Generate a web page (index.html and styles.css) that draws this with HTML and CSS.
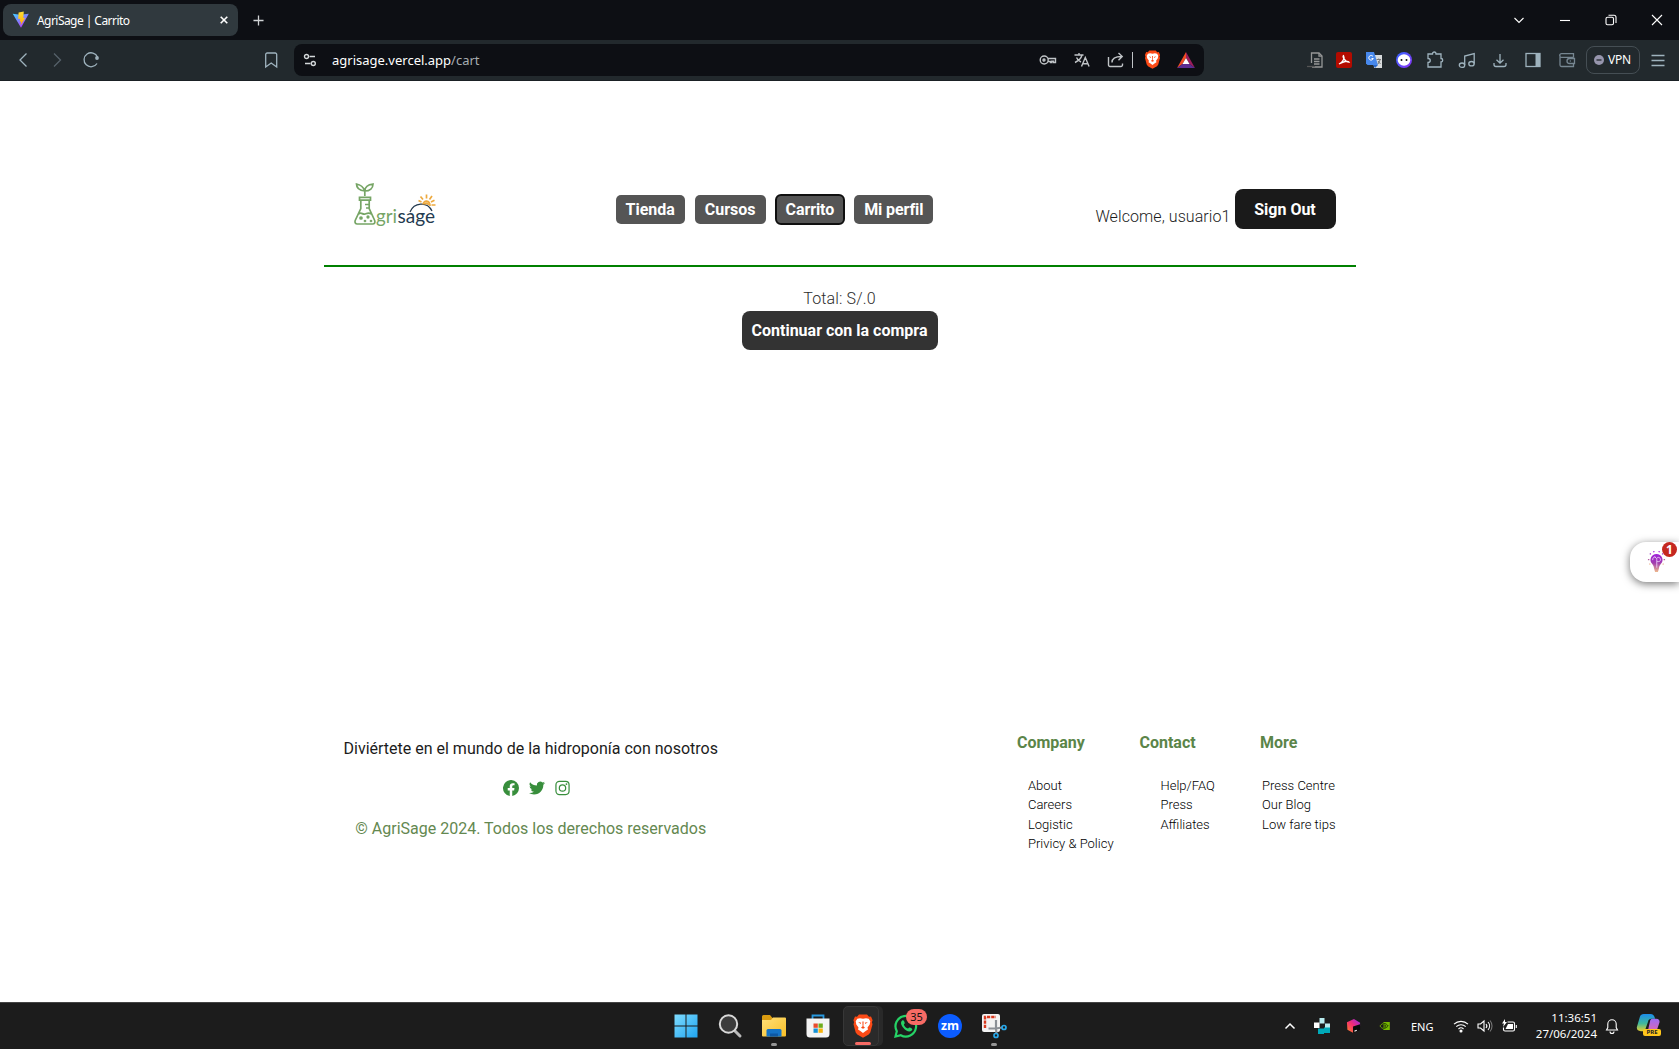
FILE: index.html
```html
<!DOCTYPE html>
<html lang="es">
<head>
<meta charset="utf-8">
<title>AgriSage | Carrito</title>
<link rel="stylesheet" href="styles.css">
</head>
<body>
<svg class="defs" width="0" height="0">
  <defs>
    <linearGradient id="vite" x1="0" y1="0" x2=".7" y2="1"><stop stop-color="#41d1ff"/><stop offset="1" stop-color="#bd34fe"/></linearGradient>
    <linearGradient id="bolt" x1="0" y1="0" x2="0" y2="1"><stop stop-color="#ffdd35"/><stop offset="1" stop-color="#ffa800"/></linearGradient>
    <linearGradient id="win" x1="0" y1="0" x2="1" y2="1"><stop stop-color="#7fdcff"/><stop offset="1" stop-color="#1fa4f0"/></linearGradient>
    <linearGradient id="fold" x1="0" y1="0" x2="1" y2="1"><stop stop-color="#ffe07a"/><stop offset="1" stop-color="#f8bf27"/></linearGradient>
    <linearGradient id="bulb" x1="0" y1="0" x2="0" y2="1"><stop stop-color="#a020dc"/><stop offset=".5" stop-color="#a03cae"/><stop offset="1" stop-color="#eeb98d"/></linearGradient>
    <linearGradient id="cube" x1="0" y1="1" x2="1" y2="0"><stop stop-color="#ff8a20"/><stop offset=".5" stop-color="#f52b71"/><stop offset="1" stop-color="#9128e8"/></linearGradient>
    <linearGradient id="cop1" x1="0" y1="0" x2="0" y2="1"><stop stop-color="#1b8ded"/><stop offset=".55" stop-color="#40b89b"/><stop offset="1" stop-color="#e8cf2e"/></linearGradient>
    <linearGradient id="cop2" x1="0" y1="0" x2="0" y2="1"><stop stop-color="#9b6cf3"/><stop offset="1" stop-color="#f0669d"/></linearGradient>
    <linearGradient id="disc" x1="0" y1="0" x2="1" y2="1"><stop stop-color="#3267ff"/><stop offset="1" stop-color="#8d31f6"/></linearGradient>
    <symbol id="lion" viewBox="0 0 20 24">
      <path fill="#fb4a16" d="M6 .5h8l2 2.200 2-.2 1.600 3.700-.7 2 .6 2-2.200 8.200-1.600 2L10 23.700l-5.700-3.300-1.600-2L.5 10.200l.6-2-.7-2L2 2.500l2 .2z"/>
      <path fill="#fff" d="M7 4.200l3 .6 3-.6 2.700.5 1.600 2.600-.6 3.200-2.200 3 .5 2-2 1.300-3 2.300-3-2.300-2-1.300.5-2-2.200-3-.6-3.200 1.600-2.600z"/>
      <path fill="#fb4a16" d="M5.200 8l3.100.8-.8 1.300zM14.800 8l-3.100.8.8 1.300zM9.400 7.500h1.200l-.2 4.800 1.600 1.500-2 1-2-1 1.600-1.500z"/>
    </symbol>
  </defs>
</svg>

<header class="browser">
  <div class="tabs">
    <div class="tab">
      <svg class="fav" viewBox="0 0 18 18"><path fill="url(#vite)" d="M.7 2.800l7.500 1 8.600-1L9 16.700z"/><path fill="url(#bolt)" d="M11.800.5L6.600 1.600 6.200 8l2-.3-.4 3.200 1.500-.5-.8 4 4.800-7.700-2 .3z"/></svg>
      <span class="tab-title">AgriSage | Carrito</span>
      <svg class="tab-close" viewBox="0 0 8 8"><path d="M.7.700l6.600 6.600M7.300.7L.7 7.300"/></svg>
    </div>
    <svg class="new-tab" viewBox="0 0 12 12"><path d="M6 .5v11M.5 6h11"/></svg>
    <div class="window-controls">
      <svg viewBox="0 0 12 12"><path d="M1.500 4L6 8.500 10.500 4"/></svg>
      <svg viewBox="0 0 12 12"><path d="M1 6.500h10"/></svg>
      <svg viewBox="0 0 12 12"><rect x="1" y="3.200" width="7.500" height="7.500" rx="1.500"/><path d="M3.500 1.300H9a2 2 0 0 1 2 2V9"/></svg>
      <svg viewBox="0 0 12 12"><path d="M1 1l10 10M11 1L1 11"/></svg>
    </div>
  </div>
  <div class="toolbar">
    <svg class="ic back" viewBox="0 0 20 20"><path d="M13.500 3.500L7 10l6.500 6.500"/></svg>
    <svg class="ic forward" viewBox="0 0 20 20"><path d="M7 3.500l6.500 6.500L7 16.500"/></svg>
    <svg class="ic reload" viewBox="0 0 20 20"><path d="M16.500 7A7 7 0 1 0 16 13.500"/><circle cx="16" cy="8" r="1.900" fill="#9fb0ba" stroke="none"/></svg>
    <svg class="ic bookmark" viewBox="0 0 20 20"><path d="M4.700 4.500a1.500 1.500 0 0 1 1.500-1.500h8a1.500 1.500 0 0 1 1.500 1.500V17l-5.500-4-5.500 4z"/></svg>
    <div class="address">
      <svg class="site" viewBox="0 0 14 14"><circle cx="3.500" cy="3.500" r="2"/><path d="M6.500 3.500H12M2 10.500h5.500"/><circle cx="10.300" cy="10.500" r="2"/></svg>
      <span class="url">agrisage.vercel.app<i>/cart</i></span>
      <div class="address-tools">
        <svg class="key" viewBox="0 0 18 14"><circle cx="5.200" cy="7" r="4"/><circle cx="5" cy="7" r="1" /><path d="M9 5.500h7.500v4h-2V8.200h-1.700v1.300H11.500V8.500H9"/></svg>
        <svg class="lang" viewBox="0 0 18 18"><path d="M1.500 4h9M6 2v2M9 4c-1 4-4 6-7 7.500M3.500 6.500C4.500 9 6 10 8 11M8.500 15.500l3.800-9 3.800 9M9.700 12.700h5.200"/></svg>
        <svg class="share" viewBox="0 0 18 18"><path d="M1.500 6v8a1.500 1.500 0 0 0 1.500 1.500h11a1.500 1.500 0 0 0 1.500-1.500v-1.500M5 11.500c0-4 3-6 9.500-6M11.500 2l3.700 3.500-3.700 3.700"/></svg>
        <b class="sep"></b>
        <svg class="shield"><use href="#lion"/></svg>
        <svg class="bat" viewBox="0 0 18 16"><path fill="#f04b23" d="M9 0v6L5.500 12 0 16z"/><path fill="#9c1d5c" d="M9 0l9 16-5.500-4L9 6z"/><path fill="#5c2d91" d="M0 16l5.500-4h7L18 16z"/><path fill="#fff" d="M9 6l3.500 6h-7z"/></svg>
      </div>
    </div>
    <div class="extensions">
      <svg class="ic grey" viewBox="0 0 20 20"><path d="M5.500 13V3h7.500l3 3v11H6"/><path d="M13 3v3.200h3M8 9h5.500M8 11.500h5.500M8 14h5.500"/><path stroke="#555" d="M1 16.500h8"/></svg>
      <svg class="ic g8" viewBox="0 0 20 20"><rect class="solid" x="2" y="2" width="16" height="16" rx="2" fill="#b30b00"/><path stroke="#fff" d="M5 14c4-2 6-6 4.500-8.500C8 6 10.500 12 15 12c-1-1.500-6-.5-10 2z"/></svg>
      <svg class="ic g10" viewBox="0 0 20 20"><path class="solid" fill="#d8dbdd" d="M9 5h9v13h-8z"/><path class="solid" fill="#4788ec" d="M2 2h8l4 13H3.500L2 13.500z"/><path class="solid" fill="#2866c8" d="M9 15h5l-3 3z"/><path stroke="#fff" stroke-width="1" d="M9 6.500A2.300 2.300 0 1 0 9.300 8.500H7.500"/><path stroke="#777" stroke-width="1" d="M12.500 9.500H17M14.700 8.500v1M16 10l-2 4M14 11l2.500 3"/></svg>
      <svg class="ic g10" viewBox="0 0 20 20"><circle class="solid" cx="10" cy="10" r="8" fill="url(#disc)"/><ellipse class="solid" cx="10" cy="10" rx="6.300" ry="5.800" fill="#fff"/><path stroke="#222" stroke-width="1.600" d="M7.500 9v2M12.500 9v2"/></svg>
      <svg class="ic g11" viewBox="0 0 20 20"><path d="M3 4h4.500c0-2.700 3.500-2.700 3.500 0h5v4.500c2.300 0 2.300 3.500 0 3.500v5H3v-4.500c3 0 3-4 0-4z"/></svg>
      <svg class="ic g12" viewBox="0 0 20 20"><ellipse cx="5" cy="15.200" rx="2.700" ry="2.200"/><ellipse cx="14.500" cy="13.700" rx="2.700" ry="2.200"/><path d="M7.700 15V6l9.500-2.500v10M7.700 15V6"/></svg>
      <svg class="ic g13" viewBox="0 0 20 20"><path d="M10 4v9M6.500 9.800L10 13.200l3.500-3.400M4 13v1.500a2 2 0 0 0 2 2h8a2 2 0 0 0 2-2V13"/></svg>
      <svg class="ic g13" viewBox="0 0 20 20"><rect x="3" y="3.500" width="14" height="13"/><path class="solid" fill="#9fb3be" d="M12.500 3.500H17v13h-4.500z"/></svg>
      <svg class="ic g14 dim" viewBox="0 0 20 20"><path d="M3 5.500V15a1.500 1.500 0 0 0 1.500 1.500h12v-3M16.500 7.500V3.700h-12a1.500 1.500 0 0 0 0 3.600h12M17.500 13.500h-5a2.500 2.500 0 0 1 0-5h5z"/><path d="M12.800 11h1"/></svg>
      <span class="vpn"><svg viewBox="0 0 10 10"><circle cx="5" cy="5" r="5" fill="#9695ad"/><path stroke="#22292d" stroke-width="1.300" d="M2.500 5h5"/></svg>VPN</span>
      <svg class="ic g8" viewBox="0 0 20 20"><path d="M3.500 5.500h13M3.500 10.500h13M3.500 15.500h13"/></svg>
    </div>
  </div>
</header>

<main class="page">
  <div class="masthead">
    <svg class="logo" viewBox="0 0 82 48">
      <g fill="none" stroke="#76a565" stroke-width="1.700">
        <path d="M10.800 14V9C9 4 5.500 2.500 2.500 2c0 4 3 6.500 8.300 7C11 5 14 2.500 19 2c0 4-3 7-8.200 7"/>
        <path d="M5.500 15.300h11v2.900h-11zM6.800 18.500v8L1.200 38.500c-.7 2 .3 3.500 2 3.500h15.500c1.800 0 2.700-1.500 2-3.500l-5.500-12v-8M11 22.500h4M12 26h3M4.500 32c3-2.500 4 1 6.500 0s4-2 6.500 0"/>
        <circle cx="7" cy="36" r="1"/><circle cx="14" cy="35" r=".8"/><circle cx="11" cy="39" r=".5"/><circle cx="17" cy="39" r=".5"/>
      </g>
      <text x="22" y="41" textLength="21" lengthAdjust="spacingAndGlyphs" fill="#76a565">gri</text>
      <text x="43.500" y="41" textLength="37.500" lengthAdjust="spacingAndGlyphs" fill="#243b50">sage</text>
      <path d="M56 30c4-9.500 17-11 22-1" fill="none" stroke="#243b50" stroke-width="1.300"/>
      <path d="M69 22.500c.5-5 7-4.500 7 1.500M70.500 22.500c1-2 3-2 4 .5M67.500 20l-3-1.500M69 17.500l-2.500-3M72.500 16.500V12.500M75.500 17.500l2.500-3.500M77 20l3.500-1.700M77.500 23h4" fill="none" stroke="#eda93e" stroke-width="1.700"/>
    </svg>
    <nav class="nav">
      <a>Tienda</a><a>Cursos</a><a class="focused">Carrito</a><a>Mi perfil</a>
    </nav>
    <div class="account"><span>Welcome, usuario1</span><button class="sign-out">Sign Out</button></div>
  </div>
  <section class="cart">
    <p>Total: S/.0</p>
    <button class="checkout">Continuar con la compra</button>
  </section>
  <footer class="footer">
    <div class="about">
      <p class="tagline">Diviértete en el mundo de la hidroponía con nosotros</p>
      <div class="social">
        <svg viewBox="0 0 16 16"><path d="M16 8.050a8 8 0 1 0-9.250 7.950v-5.620H4.720V8.050h2.030V6.280c0-2 1.200-3.130 3.020-3.130.88 0 1.790.16 1.790.16v1.980h-1c-1 0-1.310.62-1.310 1.260v1.500h2.220l-.35 2.330H9.250V16A8 8 0 0 0 16 8.050z"/></svg>
        <svg viewBox="0 0 16 16"><path d="M5 14.500c6 0 9.300-5 9.300-9.300v-.4A6.700 6.700 0 0 0 16 3.100a6.500 6.500 0 0 1-1.900.5 3.300 3.300 0 0 0 1.500-1.800 6.600 6.600 0 0 1-2.100.8 3.300 3.300 0 0 0-5.600 3A9.300 9.300 0 0 1 1.100 2.200a3.300 3.300 0 0 0 1 4.400 3.200 3.200 0 0 1-1.500-.4 3.300 3.300 0 0 0 2.700 3.200 3.200 3.200 0 0 1-1.500.1 3.300 3.300 0 0 0 3.100 2.200A6.600 6.600 0 0 1 0 13a9.300 9.300 0 0 0 5 1.500z"/></svg>
        <svg viewBox="0 0 16 16"><g fill="none" stroke="#388e3c" stroke-width="1.300"><rect x="1" y="1" width="14" height="14" rx="3.700"/><circle cx="8" cy="8" r="3.400"/></g><circle cx="12.200" cy="3.800" r="1"/></svg>
      </div>
      <p class="copyright">© AgriSage 2024. Todos los derechos reservados</p>
    </div>
    <div class="links company"><h3>Company</h3><ul><li>About</li><li>Careers</li><li>Logistic</li><li>Privicy &amp; Policy</li></ul></div>
    <div class="links contact"><h3>Contact</h3><ul><li>Help/FAQ</li><li>Press</li><li>Affiliates</li></ul></div>
    <div class="links more"><h3>More</h3><ul><li>Press Centre</li><li>Our Blog</li><li>Low fare tips</li></ul></div>
  </footer>
  <aside class="helper">
    <svg viewBox="0 0 20 24"><path fill="url(#bulb)" d="M10 3.500a6.300 6.300 0 0 0-4.500 10.700c1.500 2 1.700 3 2 4.800l1 3.500h3l1-3.500c.3-1.800.5-2.800 2-4.800A6.300 6.300 0 0 0 10 3.500z"/><path stroke="url(#bulb)" stroke-width="1.400" fill="none" d="M1 9.500h1.500M17.500 9.500H19M3 3l1 1M17 3l-1 1M7 .5l.4 1.300M13 .5l-.4 1.300M2.500 14.500l1-.5M17.500 14.500l-1-.5"/><path stroke="#efd2fa" stroke-width=".9" fill="none" d="M10.300 18v-9M6 10c0-4 3-4 4-1.500 2-3 5-.5 4 2-1 1.500-2.500 1-3.500 1M8 6.500l1.500 1"/></svg>
    <span class="badge">1</span>
  </aside>
</main>

<div class="taskbar">
  <div class="apps">
    <div class="app"><svg viewBox="0 0 24 24"><path fill="url(#win)" d="M.5.500h11v11H.5zM12.500.5h11v11h-11zM.5 12.500h11v11H.5zM12.500 12.500h11v11h-11z"/></svg></div>
    <div class="app"><svg viewBox="0 0 24 24"><path stroke="#b9b9b9" stroke-width="3" stroke-linecap="round" d="M16.500 16.500l5.500 5.500"/><circle cx="10.500" cy="10" r="8.700" fill="#3b3b3b" stroke="#d8d8d8" stroke-width="2"/></svg></div>
    <div class="app dot"><svg viewBox="0 0 24 24"><path fill="#d99b10" d="M0 2.500A1.500 1.500 0 0 1 1.500 1H8l2.500 3H20v6H0z"/><path fill="url(#fold)" d="M0 6h9l2-2.500h12a1 1 0 0 1 1 1v17a1 1 0 0 1-1 1H1a1 1 0 0 1-1-1z"/><path fill="#1473c7" d="M4.500 22.500v-6a1.500 1.500 0 0 1 1.500-1.500h12a1.500 1.500 0 0 1 1.500 1.500v6z"/><path fill="#0d58a4" d="M8 19.500h8v3H8z"/></svg></div>
    <div class="app"><svg viewBox="0 0 24 24"><path fill="none" stroke="#2899e0" stroke-width="1.800" d="M6.500 6V1.500h11V6"/><path fill="#f4f4f4" d="M.5 4.500h23V20a3.500 3.500 0 0 1-3.500 3.500H4A3.500 3.500 0 0 1 .5 20z"/><path fill="#e94b2c" d="M7.500 9.500h4.300v4.300H7.500z"/><path fill="#6eac1b" d="M12.500 9.500h4.300v4.300h-4.300z"/><path fill="#1491d6" d="M7.500 14.500h4.300v4.300H7.500z"/><path fill="#f7b20b" d="M12.500 14.500h4.300v4.300h-4.300z"/></svg></div>
    <div class="app active"><svg><use href="#lion"/></svg></div>
    <div class="app"><svg viewBox="0 0 24 24"><path fill="none" stroke="#25d366" stroke-width="2.200" d="M1.500 22.500l1.300-5.300A10.300 10.300 0 1 1 6.800 21.200z"/><path fill="#25d366" d="M8.500 6.200C6 8 7 11 9.500 14s6 4.500 8.200 2.500c1.200-1.200.8-1.800-1.700-3-1.500-.6-1.500 1.500-2.700.8-1.500-.8-2.700-2-3.300-3.400-.4-1 1-1 .7-2.200-.5-1.800-.8-2.800-2.200-2.500z"/></svg><span class="count">35</span></div>
    <div class="app"><svg viewBox="0 0 24 24"><circle cx="12" cy="12" r="12" fill="#0b5cff"/><text class="zm" x="3" y="15.800" textLength="18" lengthAdjust="spacingAndGlyphs">zm</text></svg></div>
    <div class="app dot"><svg class="snip" viewBox="0 0 24 24"><rect width="18" height="18" rx="2" fill="#f3f3f3"/><path d="M3 14V3h11" fill="none" stroke="#d93a20" stroke-width="2.400" stroke-dasharray="3.300 1"/><path d="M6.500 14.500H14V6M14 14.500l6-1M14 14.500L14.500 20" fill="none" stroke="#8b9096" stroke-width="2.200"/><g fill="none" stroke="#28a8ea" stroke-width="1.700"><circle cx="22" cy="13.500" r="2"/><circle cx="14" cy="21.500" r="2"/></g></svg></div>
  </div>
  <div class="tray">
    <svg class="t-up" viewBox="0 0 12 12"><path d="M1.500 8.500L6 4l4.500 4.500"/></svg>
    <svg class="t-tiles" viewBox="0 0 16 16"><path fill="#b9ecef" d="M5.500 0h5v5.500h-5zM11 5.500h5v4.500h-5z"/><path fill="#fff" d="M0 4.500h5.500v5.500H0z"/><path fill="#00a9b8" d="M4 10.500h6V16H4zM10 9.500h6v5.500h-6z"/></svg>
    <svg class="t-cube" viewBox="0 0 16 16"><path fill="url(#cube)" d="M1 4l7.500-3.500L15 4.500V8l-7 3v4.500L1.500 12z"/><path fill="#090909" d="M7.500 8.500L15 6v6l-7.500 3.500z"/><path stroke="#fff" d="M9 13.500l2.500-1"/></svg>
    <svg class="t-nv" viewBox="0 0 14 10"><path fill="#76b900" d="M5 0h8v10H5z"/><path fill="none" stroke="#76b900" d="M5 2C3 2 1.500 4 .7 5c1 1.500 2.500 3 4.300 3"/><path fill="none" stroke="#183000" d="M5 2c3-.4 5 1.500 6 3-1 1-3 3-6 3M5 4c2-.3 3 .5 3.500 1.200C8 6 6.500 6.500 5 6"/></svg>
    <span class="t-lang">ENG</span>
    <svg class="t-wifi" viewBox="0 0 16 14"><path d="M1 5.200a10 10 0 0 1 14 0M3.300 7.700a6.800 6.800 0 0 1 9.400 0M5.500 10a3.600 3.600 0 0 1 5 0"/><circle cx="8" cy="12" r="1" fill="#fff"/></svg>
    <svg class="t-vol" viewBox="0 0 16 14"><path d="M1 5h2.500L7 2v10L3.500 9H1zM9 5a3 3 0 0 1 0 4M11 3a6 6 0 0 1 0 8"/><path stroke="#777" d="M13 1.500a8.500 8.500 0 0 1 0 11"/></svg>
    <svg class="t-batt" viewBox="0 0 16 14"><path d="M6.500 3H12a1.500 1.500 0 0 1 1.500 1.500v6A1.500 1.500 0 0 1 12 12H4a1.500 1.500 0 0 1-1.500-1.500V8.500M15.300 6v3"/><path fill="#fff" stroke="none" d="M7 5h5v5H4.500zM4 0L1 4.500h2L2 8l4-5H4z"/></svg>
    <div class="clock"><span>11:36:51</span><span>27/06/2024</span></div>
    <svg class="t-bell" viewBox="0 0 14 16"><path d="M1.500 12l1.300-2.500V6a4.200 4.200 0 0 1 8.400 0v3.500L12.500 12zM5 13.500a2 2 0 0 0 4 0"/></svg>
    <div class="copilot"><svg viewBox="0 0 24 22"><path fill="url(#cop1)" d="M7 0h7c3 0 4 2 5 5h-4c-2 0-3 1-3.500 3L8 18H4c-3 0-5-2-4-5L3 3c.6-2 2-3 4-3z"/><path fill="url(#cop2)" d="M16 5h4c3 0 4 2 3.500 4L20 19c-.6 2-2 3-4 3H9l2-3 2.500-11C14 6 14.500 5 16 5z"/></svg><b>PRE</b></div>
  </div>
</div>
</body>
</html>
```
FILE: styles.css
```css
* { box-sizing: border-box; }
html, body { margin: 0; height: 100%; }
body { display: flex; flex-direction: column; width: 1679px; height: 1049px; overflow: hidden; background: #fff; font-family: Roboto, sans-serif; font-size: 16px; }
svg { display: block; flex: none; overflow: visible; }
.defs { position: absolute; }
p, h3, ul { margin: 0; padding: 0; }
ul { list-style: none; }

.browser, .taskbar { flex: none; font-family: "Noto Sans", sans-serif; color: #fff; }
.tabs { display: flex; align-items: center; height: 40px; padding-left: 3px; background: #0d0f14; }
.tab { display: flex; align-items: center; width: 235px; height: 32px; padding: 0 10px 0 9px; border-radius: 8px; background: #30393e; font-size: 12px; }
.fav { width: 18px; height: 18px; }
.tab-title { margin-left: 7px; letter-spacing: -.55px; white-space: nowrap; }
.tab-close { width: 8px; height: 8px; margin-left: auto; fill: none; stroke: #fff; stroke-width: 1.6; }
.new-tab { width: 11px; height: 11px; margin-left: 15px; fill: none; stroke: #d0d3d5; stroke-width: 1.4; }
.window-controls { display: flex; gap: 34px; margin-left: auto; padding-right: 16px; }
.window-controls svg { width: 12px; height: 12px; fill: none; stroke: #fff; stroke-width: 1.1; }
.toolbar { display: flex; align-items: center; height: 41px; padding: 0 11px 1px 13px; background: #22292d; border-bottom: 1px solid #1a2024; }
.ic { width: 20px; height: 20px; fill: none; stroke: #9fb3be; stroke-width: 1.3; }
.ic .solid { stroke: none; }
.forward { margin-left: 14px; stroke: #56616a; }
.reload { margin-left: 14px; }
.bookmark { margin-left: 160px; }
.address { display: flex; align-items: center; width: 910px; height: 32px; margin-left: 13px; padding: 0 9px; border-radius: 8px; background: #0d0f14; }
.site { width: 14px; height: 14px; fill: none; stroke: #d4d8da; stroke-width: 1.4; }
.url { margin-left: 15px; font-size: 13px; }
.url i { font-style: normal; color: #a6acb1; }
.address-tools { display: flex; align-items: center; margin-left: auto; }
.address-tools svg { fill: none; stroke: #c0c4c7; stroke-width: 1.4; }
.address-tools .key { width: 18px; height: 14px; }
.lang { width: 18px; height: 18px; margin-left: 16px; }
.share { width: 18px; height: 18px; margin-left: 16px; }
.sep { width: 1px; height: 16px; margin-left: 7px; background: #c0c4c7; }
.address-tools .shield { width: 17px; height: 19px; margin-left: 11px; stroke: none; }
.address-tools .bat { width: 18px; height: 16px; margin-left: 16px; stroke: none; }
.extensions { display: flex; align-items: center; margin-left: auto; }
.grey { stroke: #969797; }
.dim { stroke: #768691; }
.g8 { margin-left: 8px; } .g10 { margin-left: 10px; } .g11 { margin-left: 11px; }
.g12 { margin-left: 12px; } .g13 { margin-left: 13px; } .g14 { margin-left: 14px; }
.vpn { display: flex; align-items: center; gap: 4px; width: 54px; height: 28px; margin-left: 9px; padding-left: 7px; border: 1px solid #454e54; border-radius: 8px; font-size: 12px; letter-spacing: -.2px; }
.vpn svg { width: 10px; height: 10px; }

.page { position: relative; display: flex; flex: 1; flex-direction: column; align-items: center; padding-top: 81px; }
.masthead { display: flex; align-items: flex-start; width: 1032px; height: 105px; padding: 20px 20px 0 30px; border-bottom: 2px solid #008000; }
.logo { width: 82px; height: 48px; font-family: Lato, sans-serif; font-size: 20px; }
.nav { display: flex; gap: 10px; margin: 13px 0 0 180px; color: #fff; font-weight: 700; }
.nav a { height: 29px; padding: 0 10px; border-radius: 5px; background: #555; line-height: 29px; white-space: nowrap; }
.nav .focused { outline: 2px solid #101010; outline-offset: -1px; letter-spacing: -.1px; }
.nav a:last-child { letter-spacing: -.1px; }
.account { display: flex; align-items: flex-start; gap: 5px; margin: 7px 0 0 auto; color: #1c1c1c; font-weight: 300; }
.account span { margin-top: 18px; letter-spacing: .08px; line-height: 19px; }
.account span { margin-right: -1px; }
button { border: 0; border-radius: 8px; color: #fff; font: 700 16px Roboto, sans-serif; }
.sign-out { width: 101px; height: 40px; padding: 0; background: #1a1a1a; }
.cart { display: flex; flex-direction: column; align-items: center; padding-top: 22px; color: #2c2c2c; font-weight: 300; line-height: 19px; }
.cart p { letter-spacing: .15px; }
.checkout { width: 196px; height: 39px; margin-top: 3px; padding: 0; background: #333; }
.footer { display: flex; width: 992px; height: 150px; margin-top: 383px; }
.about { display: flex; flex-direction: column; align-items: center; width: 375px; margin-top: 6px; line-height: 19px; }
.tagline { color: #1c1c1c; white-space: nowrap; }
.social { display: flex; gap: 10px; margin: 22px 0 0 11px; fill: #388e3c; }
.social svg { width: 16px; height: 16px; }
.social svg:last-child { width: 15px; height: 16px; }
.copyright { margin-top: 23px; color: #648850; white-space: nowrap; }
.links { white-space: nowrap; font-weight: 300; }
.links h3 { color: #5b8549; font-size: 16px; line-height: 19px; }
.links ul { margin-top: 24px; color: #000; font-size: 13px; line-height: 19.3px; }
.company { width: 123px; margin-left: 299px; }
.company ul { padding-left: 11px; }
.contact { width: 121px; }
.contact ul { padding-left: 21px; }
.more ul { padding-left: 2px; }
.helper { position: absolute; right: 0; top: 461px; width: 49px; height: 40px; padding: 8px 0 0 17px; border-radius: 16px 0 0 16px; background: #fff; box-shadow: 0 2px 8px #0008; }
.helper svg { width: 19px; height: 24px; }
.badge { position: absolute; left: 32px; top: 0; width: 15px; height: 15px; border-radius: 50%; background: #c5281f; color: #fff; font: 700 12px/15px "Open Sans", sans-serif; text-align: center; }

.taskbar { display: flex; align-items: center; height: 47px; padding-left: 664px; border-top: 1px solid #444; background: #1c1c1c; }
.apps { display: flex; flex: none; }
.app { position: relative; display: flex; align-items: center; justify-content: center; width: 44px; height: 40px; }
.app svg { width: 24px; height: 24px; }
.app.active { width: 36px; margin: 0 5px 0 3px; border: 1px solid #373737; border-radius: 5px; background: #2a2a2a; box-shadow: 4px 0 #292929; }
.app.active svg { width: 20px; height: 24px; margin-left: 3px; }
.dot::after, .active::after { content: ""; position: absolute; bottom: 0; width: 6px; height: 3px; border-radius: 2px; background: #959595; }
.active::after { left: 11px; width: 16px; background: #f76b65; }
.count { position: absolute; left: 22px; top: 3px; width: 21px; height: 16px; border-radius: 8px; background: #f76b65; color: #111; font-size: 11px; line-height: 16px; text-align: center; }
.zm { fill: #fff; font: 700 13px "Open Sans", sans-serif; }
.tray { display: flex; align-items: center; margin-left: auto; padding-right: 17px; font-size: 11px; }
.tray svg { fill: none; stroke: #fff; stroke-width: 1.1; }
.tray .t-up { width: 12px; height: 12px; stroke-width: 1.5; }
.tray .t-tiles { width: 16px; height: 16px; margin-left: 18px; stroke: none; }
.tray .t-cube { width: 15px; height: 16px; margin-left: 16px; stroke: none; }
.tray .t-nv { width: 12px; height: 8px; margin-left: 18px; stroke: none; }
.t-lang { width: 24px; margin-left: 20px; }
.t-wifi { width: 16px; height: 14px; margin-left: 18px; }
.t-vol { width: 16px; height: 14px; margin-left: 8px; }
.t-batt { width: 16px; height: 14px; margin-left: 8px; }
.clock { display: flex; flex-direction: column; align-items: flex-end; width: 63px; margin-left: 17px; font-size: 11.5px; line-height: 16px; white-space: nowrap; }
.t-bell { width: 14px; height: 16px; margin-left: 8px; }
.copilot { position: relative; width: 25px; height: 24px; margin-left: 18px; }
.copilot svg { width: 23px; height: 21px; stroke: none; }
.copilot b { position: absolute; left: 6px; top: 15px; width: 18px; height: 7px; border-radius: 2px; background: #ffc61b; color: #222; font-size: 6px; line-height: 7px; text-align: center; }
```
